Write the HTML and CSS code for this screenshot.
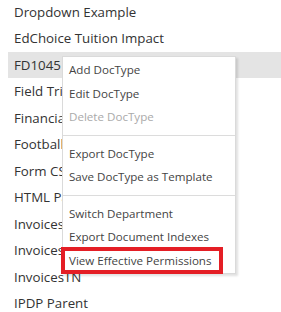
FILE: index.html
```html
<!DOCTYPE html>
<html>
<head>
<meta charset="utf-8">
<link rel="stylesheet" href="styles.css">
</head>
<body>
<div class="page">
  <ul class="list">
    <li class="row">Dropdown Example</li>
    <li class="row">EdChoice Tuition Impact</li>
    <li class="row selected">FD1045</li>
    <li class="row">Field Trip</li>
    <li class="row">Financial</li>
    <li class="row">Football</li>
    <li class="row">Form CSV</li>
    <li class="row">HTML Page</li>
    <li class="row">Invoices</li>
    <li class="row">Invoices</li>
    <li class="row">InvoicesTN</li>
    <li class="row">IPDP Parent</li>
  </ul>
  <div class="menu">
    <div class="item">Add DocType</div>
    <div class="item">Edit DocType</div>
    <div class="item disabled">Delete DocType</div>
    <div class="sep"></div>
    <div class="item">Export DocType</div>
    <div class="item">Save DocType as Template</div>
    <div class="sep"></div>
    <div class="item">Switch Department</div>
    <div class="item">Export Document Indexes</div>
    <div class="item">View Effective Permissions</div>
  </div>
  <div class="highlight"></div>
</div>
</body>
</html>
```
FILE: styles.css
```css
html, body {
  margin: 0;
  padding: 0;
  background: #fff;
  overflow: hidden;
}
.page {
  position: relative;
  width: 281px;
  height: 312px;
  overflow: hidden;
  font-family: "Open Sans", "Noto Sans", sans-serif;
}
.list {
  list-style: none;
  margin: -1.5px 0 0 8px;
  padding: 0;
}
.row {
  height: 26.5px;
  line-height: 26.5px;
  padding-left: 6px;
  font-size: 13.3px;
  color: #333;
  white-space: nowrap;
}
.row.selected {
  background: #e4e4e4;
}
.menu {
  position: absolute;
  left: 62px;
  top: 56px;
  width: 172px;
  padding: 1px 0;
  background: #fff;
  border: 1px solid #dadada;
  box-shadow: 2px 2px 2px rgba(0,0,0,0.12);
}
.item {
  height: 23.5px;
  line-height: 23.5px;
  padding-left: 6px;
  font-size: 11.6px;
  color: #444;
  white-space: nowrap;
}
.item.disabled {
  color: #aaa;
}
.sep {
  height: 1px;
  background: #dcdcdc;
  margin: 6px 0;
}
.highlight {
  position: absolute;
  left: 61px;
  top: 247px;
  width: 154px;
  height: 19px;
  border: 4px solid #e41e25;
}
```
